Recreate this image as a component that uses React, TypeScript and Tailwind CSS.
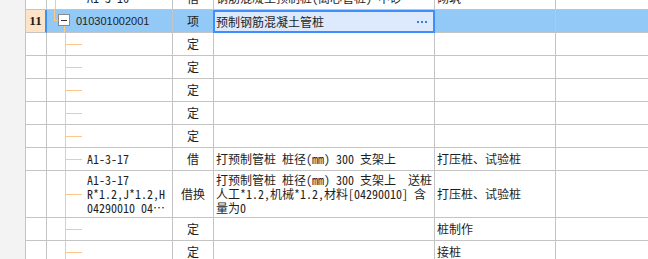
import React from "react";

const line = "border-[#c4c4c4]";
const tree = "border-[#fcc985]";
const cjk = "font-['Noto_Sans_Mono_CJK_SC','Noto_Sans_CJK_SC',sans-serif]";

type RowProps = {
  h?: string;
  code?: string[];
  type: string;
  name?: string[];
  note?: string;
  first?: boolean;
};

function ChildCode({ code }: { code?: string[] }) {
  return (
    <div className="flex h-full">
      <div className="w-[18px] shrink-0" />
      <div className={`w-[17px] shrink-0 flex items-center border-l ${tree}`}>
        <div className="h-px w-full bg-[#fcc985]" />
      </div>
      <div className={`pl-[5px] flex flex-col justify-center text-[12px] leading-[14px] text-[#1e1e1e] ${cjk}`}>
        {code?.map((c) => (
          <span key={c} className="whitespace-nowrap">
            {c}
          </span>
        ))}
      </div>
    </div>
  );
}

function Row({ h = "h-[23px]", code, type, name, note, first }: RowProps) {
  return (
    <div className={`flex ${h} shrink-0`}>
      <div className={`w-[21px] shrink-0 border-r border-b ${line}`} />
      <div className={`w-[126px] shrink-0 border-r border-b ${line}`}>
        {first ? (
          <div className="flex h-full">
            <div className="w-[8px] shrink-0" />
            <div className={`w-[10px] shrink-0 border-l ${tree}`} />
            <div className={`pl-[22px] flex items-center text-[12px] text-[#1e1e1e] ${cjk}`}>A1-3-16</div>
          </div>
        ) : (
          <ChildCode code={code} />
        )}
      </div>
      <div className={`w-[41px] shrink-0 border-r border-b ${line} flex items-center justify-center text-[12px] text-[#1e1e1e] ${cjk}`}>
        {type}
      </div>
      <div className={`w-[221px] shrink-0 border-r border-b ${line} pl-[2px] flex flex-col justify-center text-[12px] leading-[14px] text-[#1e1e1e] ${cjk}`}>
        {name?.map((n) => (
          <span key={n} className="whitespace-pre">
            {n}
          </span>
        ))}
      </div>
      <div className={`w-[121px] shrink-0 border-r border-b ${line} pl-[2px] flex items-center text-[12px] text-[#1e1e1e] ${cjk}`}>
        {note}
      </div>
      <div className={`flex-1 border-b ${line}`} />
    </div>
  );
}

function SelectedRow() {
  return (
    <div className="flex h-[23px] shrink-0 bg-[#93c9f7]">
      <div className={`w-[21px] shrink-0 border-r-2 border-r-[#3b8ff5] border-b ${line} bg-[#fde4c8] flex items-center justify-center font-['Liberation_Serif',serif] font-bold text-[13px] text-[#1e1e1e]`}>
        11
      </div>
      <div className={`w-[126px] shrink-0 border-r border-b ${line} flex`}>
        <div className="w-[7px] shrink-0" />
        <div className="w-[4px] shrink-0 flex flex-col">
          <div className={`h-[11px] border-l border-b ${tree}`} />
        </div>
        <div className="w-[12px] shrink-0 flex flex-col">
          <div className="h-[4px]" />
          <div className="h-[12px] w-[12px] border border-[#8a8a8a] bg-white flex items-center justify-center">
            <div className="h-px w-[6px] bg-[#333]" />
          </div>
          <div className={`w-[7px] flex-1 border-r ${tree}`} />
        </div>
        <div className="pl-[6px] flex items-center text-[11px] text-[#1e1e1e] font-['Liberation_Sans',sans-serif]">
          010301002001
        </div>
      </div>
      <div className={`w-[40px] shrink-0 border-b ${line} flex items-center justify-center text-[12px] text-[#1e1e1e] ${cjk}`}>
        项
      </div>
      <div className="w-[222px] shrink-0 border-2 border-[#3d8ffb] bg-[#dde9fc] flex items-center justify-between pl-[1px] pr-[6px]">
        <span className={`text-[12px] text-[#1e1e1e] ${cjk}`}>预制钢筋混凝土管桩</span>
        <div className="flex gap-[2px]">
          <div className="h-[2px] w-[2px] bg-[#3a7fd0]" />
          <div className="h-[2px] w-[2px] bg-[#3a7fd0]" />
          <div className="h-[2px] w-[2px] bg-[#3a7fd0]" />
        </div>
      </div>
      <div className={`w-[121px] shrink-0 border-r border-b ${line}`} />
      <div className={`flex-1 border-b ${line}`} />
    </div>
  );
}

export default function App() {
  return (
    <div className="h-[259px] w-[648px] overflow-hidden bg-white flex">
      <div className={`w-[26px] shrink-0 border-r ${line} bg-[#f3f3f3]`} />
      <div className="flex-1 flex flex-col -mt-[13px]">
        <Row first type="借" name={["钢筋混凝土预制桩(离心管桩) 中砂 …"]} note="砌筑" />
        <SelectedRow />
        <Row type="定" />
        <Row type="定" />
        <Row type="定" />
        <Row type="定" />
        <Row type="定" />
        <Row code={["A1-3-17"]} type="借" name={["打预制管桩 桩径(mm) 300 支架上"]} note="打压桩、试验桩" />
        <Row
          h="h-[47px]"
          code={["A1-3-17", "R*1.2,J*1.2,H", "04290010 04…"]}
          type="借换"
          name={["打预制管桩 桩径(mm) 300 支架上  送桩", "人工*1.2,机械*1.2,材料[04290010] 含", "量为0"]}
          note="打压桩、试验桩"
        />
        <Row type="定" note="桩制作" />
        <Row type="定" note="接桩" />
      </div>
    </div>
  );
}
